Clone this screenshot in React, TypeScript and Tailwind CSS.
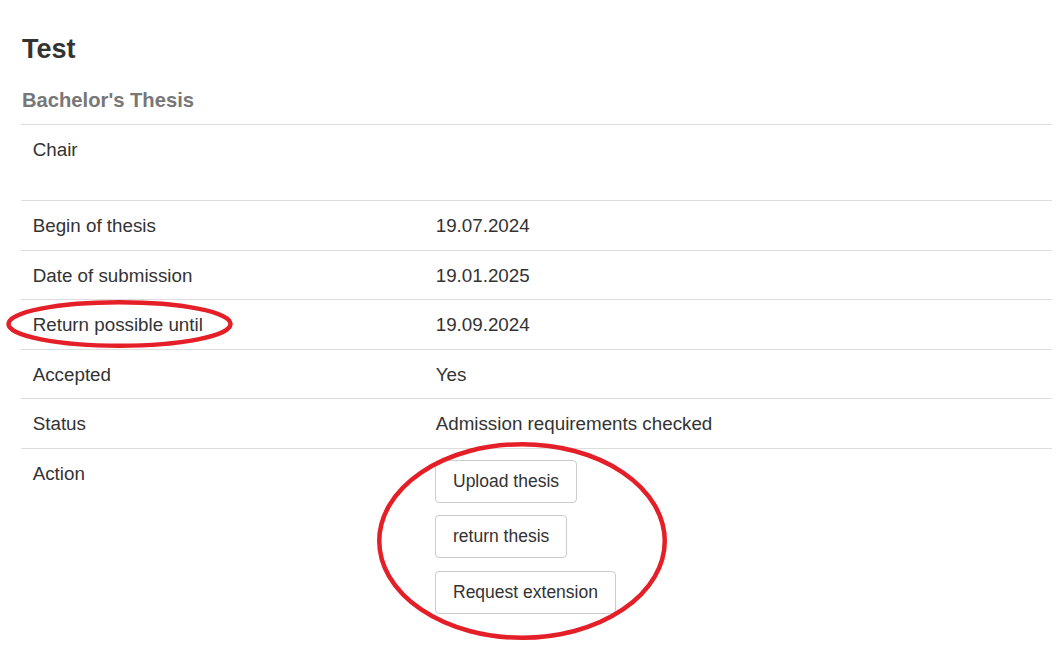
import React from "react";

const rows: { label: string; value: React.ReactNode; tall?: boolean }[] = [
  { label: "Chair", value: "", tall: true },
  { label: "Begin of thesis", value: "19.07.2024" },
  { label: "Date of submission", value: "19.01.2025" },
  { label: "Return possible until", value: "19.09.2024" },
  { label: "Accepted", value: "Yes" },
  { label: "Status", value: "Admission requirements checked" },
];

function Btn({ children }: { children: React.ReactNode }) {
  return (
    <button className="self-start rounded-[4px] border border-[#ccc] bg-white px-[17px] py-[8px] text-[17.5px] leading-[25px] text-[#333]">
      {children}
    </button>
  );
}

export default function App() {
  return (
    <div className="relative min-h-[648px] bg-white font-['Liberation_Sans',Arial,sans-serif] text-[#333]">
      <div className="pl-[21px] pr-[7px] pt-[33px]">
        <h1 className="pl-px text-[27px] font-bold leading-[32px] text-[#333]">Test</h1>
        <h2 className="mt-[21px] pl-px text-[20.2px] font-bold leading-[28px] text-[#777]">Bachelor's Thesis</h2>
        <div className="mt-[10px] text-[18.8px] leading-[26.6px]">
          {rows.map((r) => (
            <div key={r.label} className={`grid grid-cols-[403px_1fr] border-t border-[#ddd] ${r.tall ? "h-[76px]" : "h-[49.6px]"}`}>
              <div className="px-[11.7px] pb-[10px] pt-[12px]">{r.label}</div>
              <div className="px-[11.7px] pb-[10px] pt-[12px]">{r.value}</div>
            </div>
          ))}
          <div className="grid grid-cols-[403px_1fr] border-t border-[#ddd]">
            <div className="px-[11.7px] pb-[10px] pt-[12px]">Action</div>
            <div className="flex flex-col gap-[12.5px] px-[11px] py-[11px]">
              <Btn>Upload thesis</Btn>
              <Btn>return thesis</Btn>
              <Btn>Request extension</Btn>
            </div>
          </div>
        </div>
      </div>
      <svg className="pointer-events-none absolute left-0 top-0" width="1059" height="648" viewBox="0 0 1059 648">
        <ellipse cx="119.5" cy="324" rx="111" ry="21.75" fill="none" stroke="#e51f27" strokeWidth="4.5" />
        <ellipse cx="522" cy="541" rx="142.75" ry="96.75" fill="none" stroke="#e51f27" strokeWidth="4.5" />
      </svg>
    </div>
  );
}
